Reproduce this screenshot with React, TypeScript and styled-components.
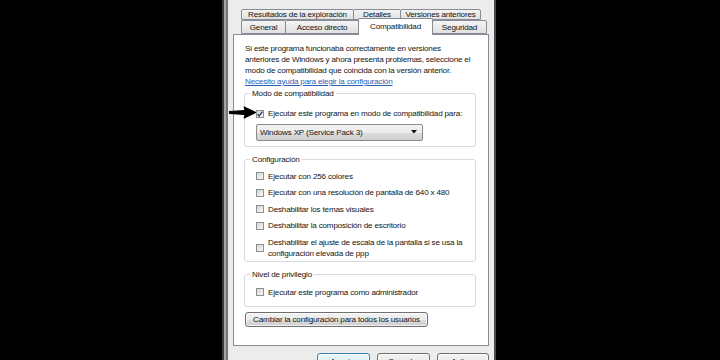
import styled, { createGlobalStyle } from "styled-components";

const GlobalStyle = createGlobalStyle`
  html, body {
    margin: 0;
    padding: 0;
    background: #000;
  }
  body {
    font-family: "Liberation Sans", Arial, sans-serif;
  }
`;

const Screen = styled.div`
  position: relative;
  width: 720px;
  height: 360px;
  overflow: hidden;
  background: #000;
  display: flex;
  padding-left: 222px;
  box-sizing: border-box;
`;

const Window = styled.div`
  width: 274px;
  height: 390px;
  flex: none;
  box-sizing: border-box;
  padding: 9px 7px 0 11px;
  background: linear-gradient(
    to right,
    #3a3a3a 0 2px,
    #a4a4a4 2px 4px,
    #767676 4px 6px,
    #ececec 6px calc(100% - 2px),
    #4c4c4c calc(100% - 2px)
  );
  font-size: 8.1px;
  letter-spacing: -0.18px;
  line-height: 11px;
  color: #141414;
`;

const TabStrip = styled.div`
  margin-left: 8px;
  display: flex;
  flex-direction: column;
`;

const TabRow = styled.div<{ $h: number }>`
  display: flex;
  align-items: flex-end;
  height: ${(p) => p.$h}px;
`;

const Tab = styled.div<{ $w: number; $active?: boolean }>`
  position: relative;
  z-index: ${(p) => (p.$active ? 2 : 1)};
  box-sizing: border-box;
  width: ${(p) => p.$w}px;
  height: ${(p) => (p.$active ? "calc(100% + 3px)" : "100%")};
  margin: ${(p) => (p.$active ? "-2px 0 -1px -1px" : "0 0 0 -1px")};
  &:first-child {
    margin-left: 0;
  }
  border: 1px solid #898c95;
  border-bottom: ${(p) => (p.$active ? "none" : "1px solid #898c95")};
  border-radius: 2px 2px 0 0;
  background: ${(p) =>
    p.$active ? "#fff" : "linear-gradient(#f4f4f4, #e0e0e0)"};
  display: flex;
  align-items: center;
  justify-content: center;
  white-space: nowrap;
  padding-bottom: ${(p) => (p.$active ? "2px" : "0")};
`;

const Panel = styled.div`
  position: relative;
  z-index: 1;
  box-sizing: border-box;
  height: 312px;
  border: 1px solid #898c95;
  background: #fff;
  padding: 8px 12px 0 10px;
`;

const Intro = styled.p`
  margin: 0 0 0 1px;
  white-space: nowrap;
`;

const HelpLink = styled.a`
  display: block;
  margin-left: 1px;
  color: #2a62b4;
  text-decoration: underline;
  white-space: nowrap;
`;

const Group = styled.fieldset<{ $gap: number; $bottom: number }>`
  margin: ${(p) => p.$gap}px 0 0 0;
  padding: 0 0 ${(p) => p.$bottom}px 11px;
  border: 1px solid #d6dadf;
  border-radius: 3px;
  min-width: 0;
`;

const GroupLabel = styled.legend`
  margin-left: -6px;
  padding: 0 2px;
  line-height: 11px;
`;

const Options = styled.div<{ $top: number }>`
  margin-top: ${(p) => p.$top}px;
  display: flex;
  flex-direction: column;
  gap: 5.5px;
`;

const CheckRow = styled.label`
  display: flex;
  align-items: center;
  gap: 4px;
  white-space: nowrap;
`;

const Box = styled.span`
  flex: none;
  box-sizing: border-box;
  width: 8px;
  height: 8px;
  border: 1px solid #8e8f8f;
  background: linear-gradient(135deg, #d4d4d4, #f9f9f9);
  display: flex;
  align-items: center;
  justify-content: center;
`;

const DropDown = styled.div`
  box-sizing: border-box;
  width: 167px;
  height: 17px;
  margin-top: 4.5px;
  padding: 0 5px 0 3px;
  border: 1px solid #8a8a8a;
  border-radius: 2px;
  background: linear-gradient(#f3f3f3 0%, #ebebeb 50%, #dddddd 51%, #d0d0d0 100%);
  display: flex;
  align-items: center;
  justify-content: space-between;
  white-space: nowrap;
`;

const PushButton = styled.button<{ $w: number; $default?: boolean }>`
  box-sizing: border-box;
  width: ${(p) => p.$w}px;
  padding: 0;
  border: 1px solid ${(p) => (p.$default ? "#3c7fb1" : "#707070")};
  border-radius: 3px;
  background: ${(p) =>
    p.$default
      ? "linear-gradient(#eaf6fd 0%, #d9f0fc 50%, #bee6fd 51%, #a7d9f5 100%)"
      : "linear-gradient(#f2f2f2 0%, #ebebeb 50%, #dddddd 51%, #cfcfcf 100%)"};
  box-shadow: inset 0 0 0 1px rgba(255, 255, 255, 0.7);
  font: inherit;
  letter-spacing: inherit;
  color: #141414;
  white-space: nowrap;
`;

const WideButton = styled(PushButton)`
  display: block;
  height: 15px;
  margin: 5px 0 0 1px;
  line-height: 13px;
`;

const Footer = styled.div`
  margin-top: 7px;
  display: flex;
  justify-content: flex-end;
  gap: 7px;
`;

const FooterButton = styled(PushButton)`
  height: 18px;
  line-height: 16px;
`;

const Pointer = styled.svg`
  position: absolute;
  left: 229px;
  top: 106px;
  z-index: 5;
`;

const Check = ({ checked }: { checked?: boolean }) => (
  <Box>
    {checked && (
      <svg width="6" height="6" viewBox="0 0 6 6">
        <path
          d="M0.6 3.2 L2.2 5 L5.4 0.6"
          fill="none"
          stroke="#2c3f6b"
          strokeWidth="1.3"
        />
      </svg>
    )}
  </Box>
);

const Option = ({
  checked,
  children,
}: {
  checked?: boolean;
  children: React.ReactNode;
}) => (
  <CheckRow>
    <Check checked={checked} />
    <span>{children}</span>
  </CheckRow>
);

const App = () => {
  return (
    <>
      <GlobalStyle />
      <Screen>
        <Window>
          <TabStrip>
            <TabRow $h={11}>
              <Tab $w={113}>Resultados de la exploración</Tab>
              <Tab $w={48}>Detalles</Tab>
              <Tab $w={81}>Versiones anteriores</Tab>
            </TabRow>
            <TabRow $h={14}>
              <Tab $w={45}>General</Tab>
              <Tab $w={74}>Acceso directo</Tab>
              <Tab $w={75} $active>
                Compatibilidad
              </Tab>
              <Tab $w={55}>Seguridad</Tab>
            </TabRow>
          </TabStrip>
          <Panel>
            <Intro>
              Si este programa funcionaba correctamente en versiones
              <br />
              anteriores de Windows y ahora presenta problemas, seleccione el
              <br />
              modo de compatibilidad que coincida con la versión anterior.
            </Intro>
            <HelpLink>Necesito ayuda para elegir la configuración</HelpLink>

            <Group $gap={1} $bottom={5}>
              <GroupLabel>Modo de compatibilidad</GroupLabel>
              <Options $top={9}>
                <Option checked>
                  Ejecutar este programa en modo de compatibilidad para:
                </Option>
              </Options>
              <DropDown>
                <span>Windows XP (Service Pack 3)</span>
                <svg width="6" height="4" viewBox="0 0 6 4">
                  <path d="M0 0 H6 L3 3.5 Z" fill="#111" />
                </svg>
              </DropDown>
            </Group>

            <Group $gap={7} $bottom={2}>
              <GroupLabel>Configuración</GroupLabel>
              <Options $top={6}>
                <Option>Ejecutar con 256 colores</Option>
                <Option>
                  Ejecutar con una resolución de pantalla de 640 x 480
                </Option>
                <Option>Deshabilitar los temas visuales</Option>
                <Option>Deshabilitar la composición de escritorio</Option>
                <Option>
                  Deshabilitar el ajuste de escala de la pantalla si se usa la
                  <br />
                  configuración elevada de ppp
                </Option>
              </Options>
            </Group>

            <Group $gap={7} $bottom={8}>
              <GroupLabel>Nivel de privilegio</GroupLabel>
              <Options $top={7}>
                <Option>Ejecutar este programa como administrador</Option>
              </Options>
            </Group>

            <WideButton $w={183}>
              Cambiar la configuración para todos los usuarios
            </WideButton>
          </Panel>
          <Footer>
            <FooterButton $w={53} $default>
              Aceptar
            </FooterButton>
            <FooterButton $w={53}>Cancelar</FooterButton>
            <FooterButton $w={52}>Aplicar</FooterButton>
          </Footer>
        </Window>
        <Pointer width="28" height="13" viewBox="0 0 28 13">
          <path
            d="M0 5.5 L16 4.5 L15 0.8 L27 6.5 L15 12.2 L16 8.5 L0 7.5 Z"
            fill="#000"
            stroke="#000"
            strokeWidth="1"
            strokeLinejoin="round"
          />
        </Pointer>
      </Screen>
    </>
  );
};

export default App;
